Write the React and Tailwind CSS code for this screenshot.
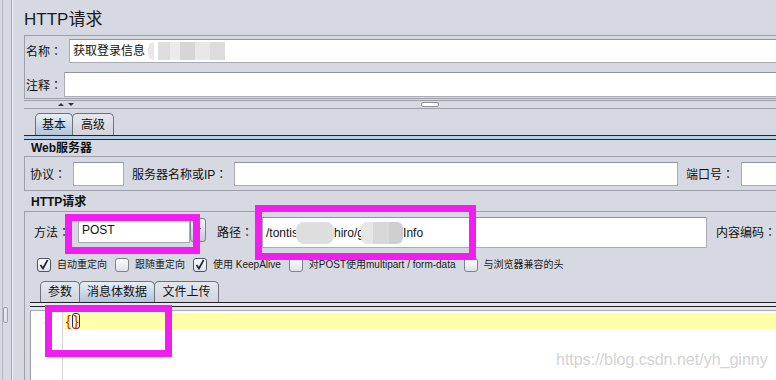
import React from "react";
import clsx from "clsx";

const font = "font-['Liberation_Sans','Noto_Sans_CJK_SC',sans-serif]";

// full-width colon centred in its cell, as the reference draws it
function Colon() {
  return <span className="font-['Noto_Sans_CJK_TC',sans-serif]">：</span>;
}

function Checkbox({ checked }) {
  return (
    <span
      className={clsx(
        "w-[14px] h-[14px] shrink-0 rounded-[3px] border bg-linear-to-b from-[#fdfdfe] to-[#dde1e8] flex items-center justify-center",
        checked ? "border-[#4f5563]" : "border-[#7d828d]"
      )}
    >
      {checked && (
        <svg width="10" height="11" viewBox="0 0 10 11">
          <path d="M1.5 6 L4 9.5 L8.6 1" stroke="#1c2433" strokeWidth="1.7" fill="none" />
        </svg>
      )}
    </span>
  );
}

function Option({ checked, children }) {
  return (
    <div className="flex items-center mr-[8px]">
      <Checkbox checked={checked} />
      <span className="ml-[6px] text-[10px] leading-[12px] whitespace-nowrap text-[#1a1a1a]">{children}</span>
    </div>
  );
}

function Tab({ active, className, children }) {
  return (
    <div
      className={clsx(
        "shrink-0 flex items-center justify-center rounded-t-[5px] border border-b-0 border-[#6c717c] text-[12px] leading-[14px]",
        active
          ? "bg-linear-to-b from-[#e8eef5] to-[#b1c5da]"
          : "bg-linear-to-b from-[#e4e7ec] to-[#d2d5dc]",
        className
      )}
    >
      {children}
    </div>
  );
}

function Field({ className, children }) {
  return (
    <div className={clsx("bg-white border border-[#a9acb4] border-t-[#8f939c]", className)}>
      {children}
    </div>
  );
}

export default function App() {
  return (
    <div className={`relative w-[776px] h-[380px] overflow-hidden bg-[#d6d9e1] text-[#111] flex ${font}`}>
      {/* left splitter sliver */}
      <div className="w-[24px] shrink-0 flex">
        <div className="w-[2px]" />
        <div className="w-px bg-[#b4b7bf]" />
        <div className="w-[8px] flex flex-col">
          <div className="mt-[307px] w-[5px] h-[16px] rounded-[2px] border border-[#9a9ea7] bg-[#e3e6ec]" />
        </div>
        <div className="w-px bg-[#a3a6ae]" />
        <div className="w-px bg-[#eef0f4]" />
      </div>

      <div className="flex-1 min-w-0 flex flex-col">
        <div className="h-[35px] pt-[11px] text-[17px] leading-[18px] text-[#1b1b1b]">HTTP请求</div>

        {/* name / comment */}
        <div className="border-y border-l border-[#9da0a9] flex flex-col text-[12px]">
          <div className="mt-[3px] h-[24px] flex">
            <span className="w-[44px] pl-px leading-[24px]">名称<Colon /></span>
            <Field className="flex-1 border-r-0 flex items-center pl-[3px]">
              <span className="leading-[14px]">获取登录信息</span>
              <span className="ml-[3px] w-[6px] h-[18px] rounded-l-full bg-[#e8e8e8]" />
              <span className="ml-[4px] w-[12px] h-[18px] bg-[#dedede]" />
              <span className="w-[10px] h-[18px] bg-[#ebebeb]" />
              <span className="w-[15px] h-[18px] bg-[#d6d6d6]" />
              <span className="w-[15px] h-[18px] bg-[#e8e8e8]" />
              <span className="w-[15px] h-[18px] bg-[#dcdcdc]" />
            </Field>
          </div>
          <div className="mt-[9px] mb-px h-[25px] flex">
            <span className="w-[39px] pl-px leading-[25px]">注释<Colon /></span>
            <Field className="flex-1 border-r-0" />
          </div>
        </div>

        {/* splitter */}
        <div className="h-[12px] flex flex-col">
          <div className="mt-px h-px bg-[#9da0a9]" />
          <div className="h-[7px] flex items-center">
            <svg className="ml-[34px]" width="16" height="5" viewBox="0 0 16 5">
              <polygon points="0,4 3,1 6,4" fill="#333" />
              <polygon points="10,1 16,1 13,4" fill="#333" />
            </svg>
            <div className="ml-[347px] w-[18px] h-[5px] rounded-[2px] border border-[#8e929b] bg-white" />
          </div>
          <div className="h-px bg-[#9da0a9]" />
        </div>

        {/* top tabs */}
        <div className="h-[24px] flex items-end pl-[11px]">
          <Tab active className="w-[38px] h-[22px]">基本</Tab>
          <Tab className="w-[42px] h-[22px] -ml-px">高级</Tab>
        </div>
        <div className="h-[5px] border-y border-[#23252a] bg-[#b8cce2]" />

        {/* web server */}
        <div className="h-[16px] pl-[7px] text-[12px] leading-[16px] font-bold">Web服务器</div>
        <div className="h-[35px] border-y border-l border-[#9da0a9] flex items-start pt-[5px] text-[12px]">
          <span className="w-[48px] shrink-0 pl-[5px] leading-[24px]">协议<Colon /></span>
          <Field className="w-[51px] h-[24px] shrink-0" />
          <span className="ml-[8px] w-[102px] shrink-0 leading-[24px] whitespace-nowrap">服务器名称或IP<Colon /></span>
          <Field className="w-[444px] h-[24px] shrink-0" />
          <span className="ml-[8px] w-[55px] shrink-0 leading-[24px] whitespace-nowrap">端口号<Colon /></span>
          <Field className="flex-1 h-[24px] border-r-0" />
        </div>

        {/* http request */}
        <div className="h-[20px] pt-[3px] pl-[7px] text-[12px] leading-[16px] font-bold">HTTP请求</div>
        <div className="flex-1 border-t border-l border-[#9da0a9] flex flex-col">
          <div className="pt-[5px] flex items-start text-[12px]">
            <span className="w-[53px] shrink-0 pl-[9px] leading-[30px]">方法<Colon /></span>
            <div className="flex shrink-0 h-[26px]">
              <Field className="w-[112px] h-[26px] flex items-center pl-[3px]">
                <span className="leading-[14px]">POST</span>
              </Field>
              <div className="w-[16px] h-[24px] mt-px rounded-[3px] border border-[#7b7f88] bg-linear-to-b from-[#f2f4f7] to-[#c6cad3] flex items-center justify-center">
                <svg width="6" height="4" viewBox="0 0 6 4">
                  <polygon points="0,0 6,0 3,4" fill="#333" />
                </svg>
              </div>
            </div>
            <span className="ml-[11px] w-[45px] shrink-0 leading-[30px]">路径<Colon /></span>
            <Field className="w-[445px] h-[31px] shrink-0 flex items-center pl-[3px]">
              <span className="leading-[14px]">/tontis</span>
              <span className="-ml-[2px] w-[38px] h-[22px] rounded-[8px] bg-[#dedede]" />
              <span className="leading-[14px]">hiro/g</span>
              <span className="-ml-[3px] w-[12px] h-[22px] rounded-l-[6px] bg-[#e6e6e6]" />
              <span className="w-[16px] h-[22px] bg-[#d8d8d8]" />
              <span className="w-[14px] h-[22px] rounded-r-[6px] bg-[#cfcfcf]" />
              <span className="leading-[14px]">Info</span>
            </Field>
            <span className="ml-[9px] leading-[30px] whitespace-nowrap">内容编码<Colon /></span>
          </div>

          <div className="mt-[9px] h-[15px] flex items-center pl-[12px]">
            <Option checked>自动重定向</Option>
            <Option>跟随重定向</Option>
            <Option checked>使用 KeepAlive</Option>
            <Option>对POST使用multipart / form-data</Option>
            <Option>与浏览器兼容的头</Option>
          </div>

          <div className="mt-[9px] h-[21px] flex items-end pl-[15px]">
            <Tab className="w-[40px] h-[21px]">参数</Tab>
            <Tab active className="w-[76px] h-[21px] -ml-px">消息体数据</Tab>
            <Tab className="w-[65px] h-[21px] -ml-px">文件上传</Tab>
          </div>
          <div className="ml-[5px] flex flex-col">
            <div className="h-px bg-[#1f2126]" />
            <div className="h-[3px] bg-[#e4e9f0]" />
            <div className="h-px bg-[#1f2126]" />
            <div className="h-[3px] bg-[#e2e4e9]" />
            <div className="h-px bg-[#a7aab2]" />
          </div>

          {/* editor */}
          <div className="ml-[5px] flex-1 bg-white border-l border-[#9a9ea6] flex">
            <div className="w-[32px] shrink-0 border-r border-[#d4d6da] pt-[2px] pl-[12px] text-[10px] leading-[16px] text-[#c9c9c9]">
              1
            </div>
            <div className="flex-1 pt-[2px]">
              <div className="h-[16px] bg-[#ffffaa] pl-[3px] flex items-center text-[14px] leading-[16px]">
                <span className="text-[#e01010]">{"{"}</span>
                <span className="ml-px h-[16px] px-[1px] rounded-[3px] border-[1.5px] border-[#1b2a86] text-[#e01010] flex items-center">
                  {"}"}
                </span>
              </div>
            </div>
          </div>
        </div>
      </div>

      {/* annotation boxes */}
      <div className="absolute left-[65px] top-[214px] w-[135px] h-[40px] border-[7px] border-[#f01ff0]" />
      <div className="absolute left-[255px] top-[205px] w-[221px] h-[55px] border-[7px] border-[#f01ff0]" />
      <div className="absolute left-[45px] top-[305px] w-[127px] h-[52px] border-[7px] border-[#f01ff0]" />

      {/* watermark */}
      <div className="absolute left-[556px] top-[352px] text-[16px] leading-[16px] text-[#d3d3d3] whitespace-nowrap">
        https://blog.csdn.net/yh_ginny
      </div>
    </div>
  );
}
